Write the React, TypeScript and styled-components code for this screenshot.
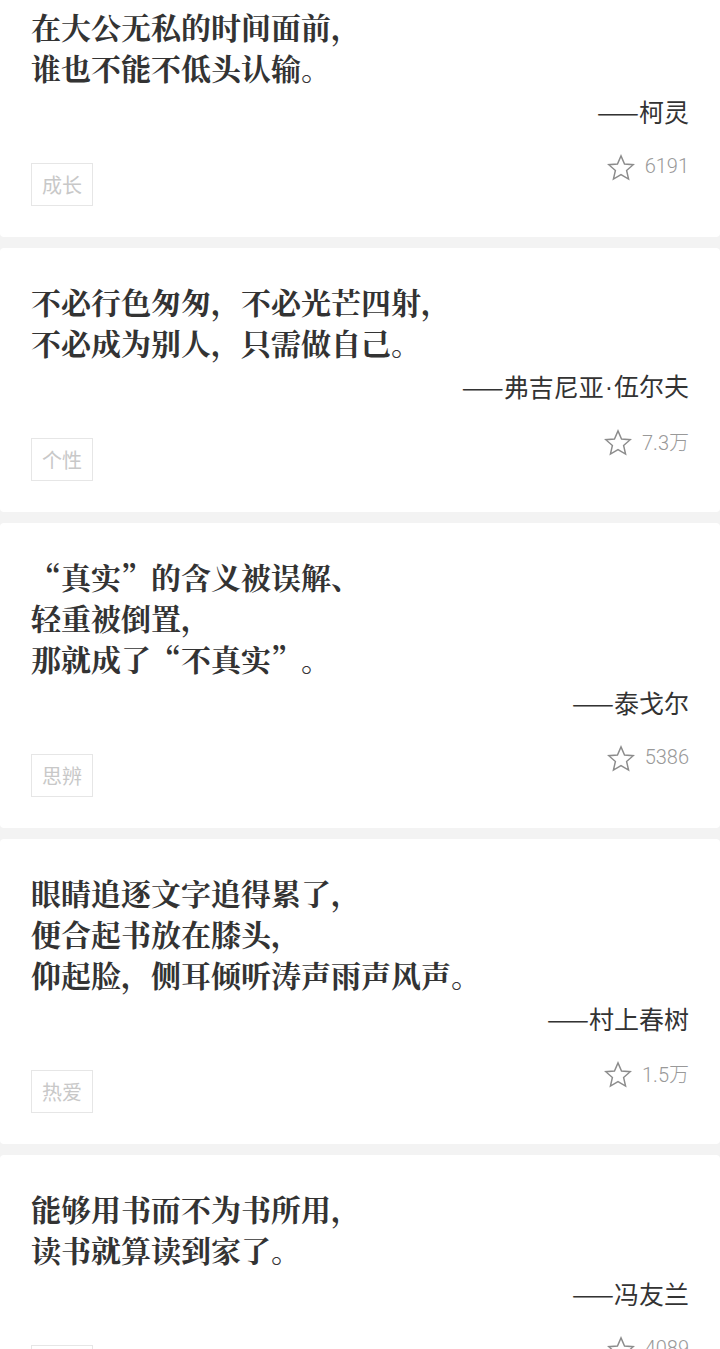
import styled, { createGlobalStyle } from 'styled-components'

type Quote = {
  lines: string[]
  author: string
  tag: string
  likes: string
}

const QUOTES: Quote[] = [
  {
    lines: ['在大公无私的时间面前，', '谁也不能不低头认输。'],
    author: '柯灵',
    tag: '成长',
    likes: '6191',
  },
  {
    lines: ['不必行色匆匆，不必光芒四射，', '不必成为别人，只需做自己。'],
    author: '弗吉尼亚·伍尔夫',
    tag: '个性',
    likes: '7.3万',
  },
  {
    lines: ['“真实”的含义被误解、', '轻重被倒置，', '那就成了“不真实”。'],
    author: '泰戈尔',
    tag: '思辨',
    likes: '5386',
  },
  {
    lines: ['眼睛追逐文字追得累了，', '便合起书放在膝头，', '仰起脸，侧耳倾听涛声雨声风声。'],
    author: '村上春树',
    tag: '热爱',
    likes: '1.5万',
  },
  {
    lines: ['能够用书而不为书所用，', '读书就算读到家了。'],
    author: '冯友兰',
    tag: '读书',
    likes: '4089',
  },
]

const StarIcon = () => (
  <svg width="28" height="28" viewBox="0 0 27 27" fill="none">
    <polygon
      points="13.5,1.8 16.9,9.6 25.3,10.3 18.9,15.9 20.8,24.2 13.5,19.8 6.2,24.2 8.1,15.9 1.7,10.3 10.1,9.6"
      stroke="#8c8c8c"
      strokeWidth="1.4"
      strokeLinejoin="miter"
    />
  </svg>
)

// 作者名里的间隔号用西文字体，保持窄点
const AuthorName = ({ name }: { name: string }) => {
  const parts = name.split('·')
  return (
    <>
      {parts.map((part, i) => (
        <span key={part}>
          {i > 0 && <NameDot>·</NameDot>}
          {part}
        </span>
      ))}
    </>
  )
}

const QuoteList = () => {
  return (
    <ListWrap>
      {QUOTES.map((q) => (
        <Card key={q.author}>
          <QuoteText>
            {q.lines.map((line) => (
              <QuoteLine key={line}>{line}</QuoteLine>
            ))}
          </QuoteText>
          <Author>
            <Dash>——</Dash>
            <AuthorName name={q.author} />
          </Author>
          <Footer>
            <Tag>{q.tag}</Tag>
            <Likes>
              <StarIcon />
              <LikeCount>{q.likes}</LikeCount>
            </Likes>
          </Footer>
        </Card>
      ))}
    </ListWrap>
  )
}

export default function App() {
  return (
    <>
      <GlobalStyle />
      <QuoteList />
    </>
  )
}

/* ****************************************************************
  QuoteList

- 名言卡片列表，页面已向下滚动，第一张卡片顶部被裁掉
*******************************************************************/

const GlobalStyle = createGlobalStyle`
  html, body {
    margin: 0;
    padding: 0;
    background: #f3f3f3;
    overflow: hidden;
  }
  body {
    font-family: "Noto Sans CJK SC", "Noto Sans", sans-serif;
  }
`

const ListWrap = styled.main`
  display: flex;
  flex-direction: column;
  gap: 11px;
  margin-top: -27px;
  background: #f3f3f3;
`

const Card = styled.section`
  display: flex;
  flex-direction: column;
  padding: 33px 31px 31px;
  background: #ffffff;
  border-radius: 4px;
`

const QuoteText = styled.div`
  font-family: "Noto Serif CJK SC", "Noto Sans CJK SC", serif;
  font-size: 30px;
  font-weight: 700;
  line-height: 41px;
  color: #333333;
`

const QuoteLine = styled.div`
  white-space: nowrap;
  height: 41px;
`

const Author = styled.div`
  display: flex;
  justify-content: flex-end;
  align-items: center;
  height: 34px;
  margin-top: 6px;
  font-size: 25px;
  line-height: 34px;
  color: #333333;
  white-space: nowrap;
`

const Dash = styled.span`
  letter-spacing: 3px;
  margin-right: -3px;
`

const NameDot = styled.span`
  font-family: "Liberation Sans", sans-serif;
  padding: 0 1px;
`

const Footer = styled.div`
  display: flex;
  justify-content: space-between;
  align-items: flex-start;
  margin-top: 26px;
`

const Tag = styled.span`
  margin-top: 9px;
  padding: 0 10px;
  border: 1px solid #e6e6e6;
  font-size: 20px;
  line-height: 41px;
  color: #c8c8c8;
`

const Likes = styled.div`
  display: flex;
  align-items: center;
  gap: 10px;
  height: 28px;
`

const LikeCount = styled.span`
  font-family: Roboto, "Noto Sans CJK SC", sans-serif;
  font-size: 20px;
  font-weight: 300;
  color: #999999;
  margin-top: -4px;
`
